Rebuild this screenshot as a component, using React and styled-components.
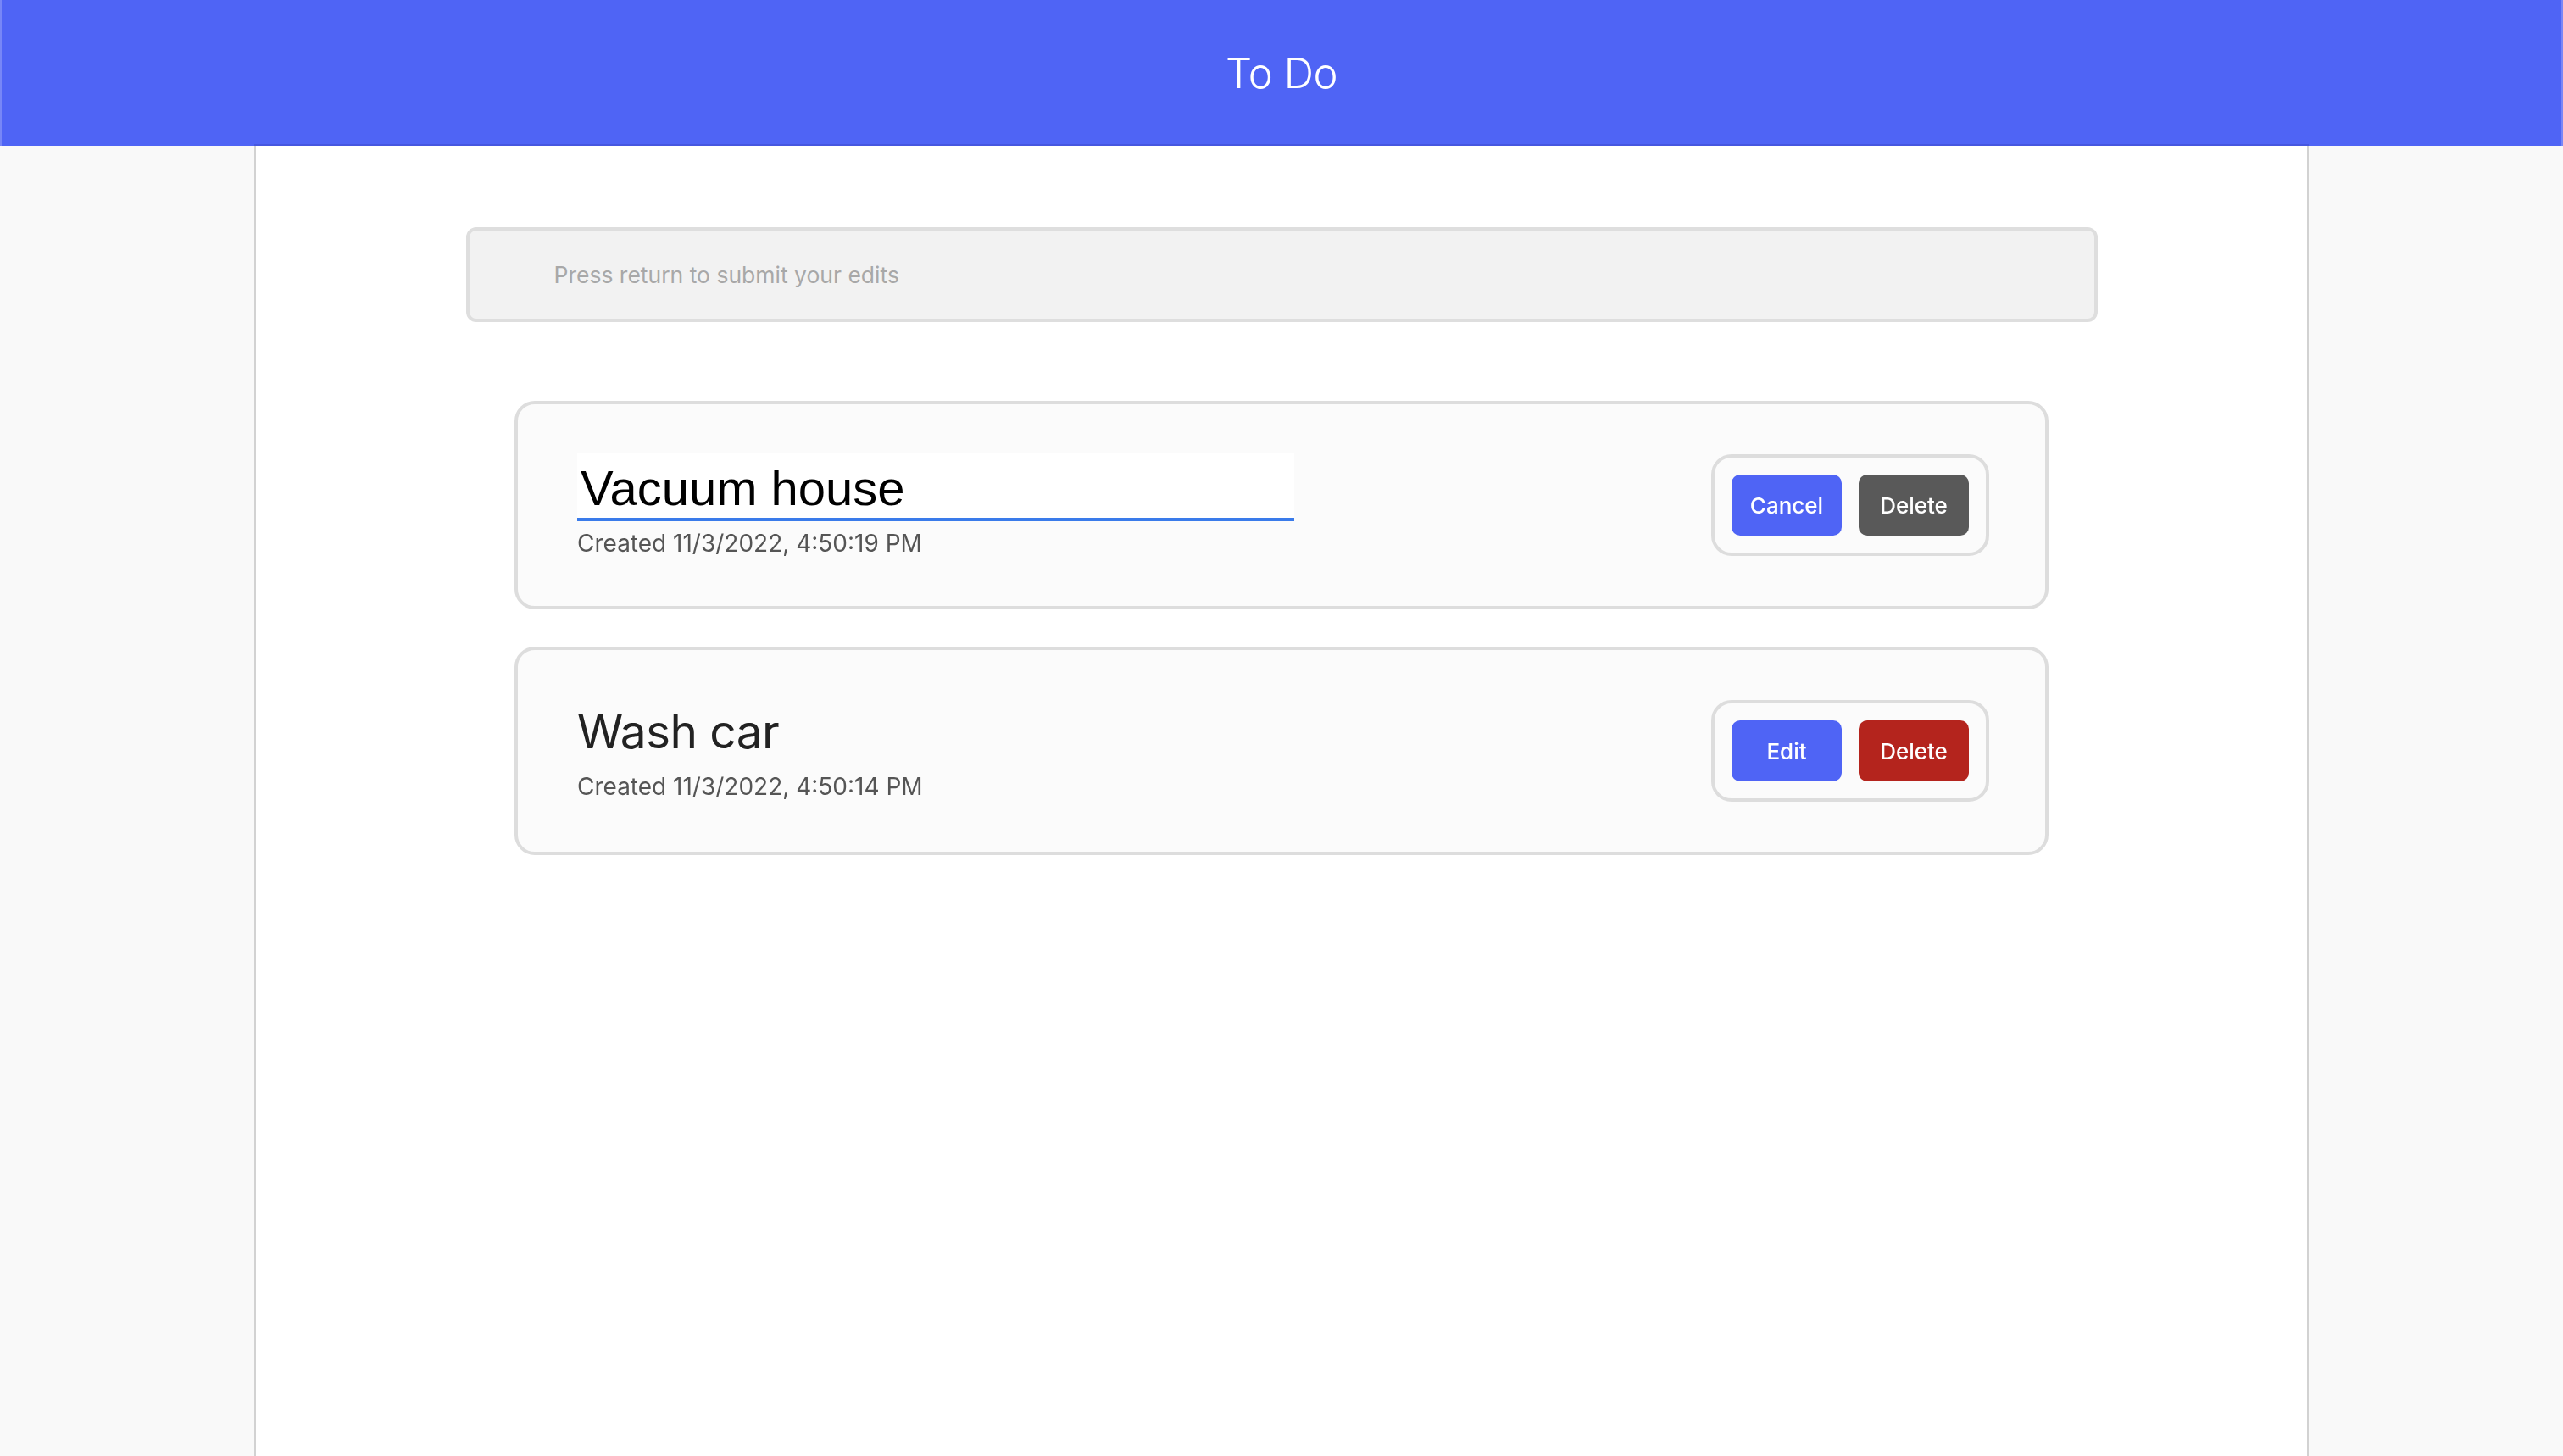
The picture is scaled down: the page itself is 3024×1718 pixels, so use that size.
import React, { useEffect, useRef } from 'react';
import styled, { createGlobalStyle } from 'styled-components';

const todos = [
  { id: 1, title: 'Vacuum house', created: '11/3/2022, 4:50:19 PM', editing: true },
  { id: 2, title: 'Wash car', created: '11/3/2022, 4:50:14 PM', editing: false }
];

function TodoItem({ todo }) {
  const inputRef = useRef(null);

  useEffect(() => {
    if (todo.editing && inputRef.current) {
      const el = inputRef.current;
      el.focus();
      el.setSelectionRange(el.value.length, el.value.length);
    }
  }, [todo.editing]);

  return (
    <Card>
      <TextBlock>
        {todo.editing ? (
          <TitleInput ref={inputRef} type="text" defaultValue={todo.title} />
        ) : (
          <Title>{todo.title}</Title>
        )}
        <CreatedAt $editing={todo.editing}>Created {todo.created}</CreatedAt>
      </TextBlock>
      <ButtonGroup>
        <ActionButton $color="#4f64f5">{todo.editing ? 'Cancel' : 'Edit'}</ActionButton>
        <ActionButton $color={todo.editing ? '#595959' : '#b4241d'}>Delete</ActionButton>
      </ButtonGroup>
    </Card>
  );
}

function App() {
  return (
    <>
      <GlobalStyle />
      <Header>
        <HeaderTitle>To Do</HeaderTitle>
      </Header>
      <Main>
        <NewTodoInput type="text" placeholder="Press return to submit your edits" />
        <List>
          {todos.map((todo) => (
            <TodoItem key={todo.id} todo={todo} />
          ))}
        </List>
      </Main>
    </>
  );
}

export default App;

const GlobalStyle = createGlobalStyle`
  * {
    box-sizing: border-box;
  }
  html, body {
    margin: 0;
    padding: 0;
    background-color: #f9f9f9;
    font-family: Inter, "Noto Sans", sans-serif;
  }
`;

const Header = styled.header`
  display: flex;
  align-items: center;
  justify-content: center;
  height: 172px;
  background-color: #4f64f5;
  border-left: 2px solid #7786f7;
  border-right: 2px solid #7786f7;
`;

const HeaderTitle = styled.h1`
  margin: 0;
  color: white;
  font-size: 49px;
  font-weight: 300;
  letter-spacing: -0.5px;
`;

const Main = styled.main`
  display: flex;
  flex-direction: column;
  align-items: center;
  width: 2424px;
  min-height: calc(100vh - 172px);
  margin: 0 auto;
  padding-top: 96px;
  background-color: white;
  border-left: 2px solid #d2d2d2;
  border-right: 2px solid #d2d2d2;
  box-shadow: 0 -2px 0 #4657e0;
`;

const NewTodoInput = styled.input`
  width: 1925px;
  height: 112px;
  padding: 0 100px;
  background-color: #f2f2f2;
  border: 4px solid #dedede;
  border-radius: 12px;
  font-family: Inter, sans-serif;
  font-size: 26.5px;
  color: #333;
  outline: none;

  &::placeholder {
    color: #a8a8a8;
  }
`;

const List = styled.div`
  display: flex;
  flex-direction: column;
  gap: 44px;
  margin-top: 93px;
`;

const Card = styled.div`
  display: flex;
  align-items: center;
  justify-content: space-between;
  width: 1810px;
  height: 246px;
  padding: 0 66px 0 70px;
  background-color: #fbfbfb;
  border: 4px solid #dddddd;
  border-radius: 24px;
`;

const TextBlock = styled.div`
  display: flex;
  flex-direction: column;
  align-items: flex-start;
`;

const TitleInput = styled.input`
  width: 846px;
  height: 80px;
  padding: 6px 4px 0;
  background-color: white;
  border: none;
  border-bottom: 4px solid #3a7bea;
  font-family: "Liberation Sans", Arial, sans-serif;
  font-size: 58px;
  color: black;
  caret-color: black;
  outline: none;
`;

const Title = styled.div`
  font-size: 55px;
  line-height: 70px;
  color: #222;
  letter-spacing: -0.6px;
`;

const CreatedAt = styled.div`
  margin-top: ${(props) => (props.$editing ? '9px' : '13px')};
  font-size: 28px;
  line-height: 34px;
  color: #555;
`;

const ButtonGroup = styled.div`
  display: flex;
  gap: 20px;
  padding: 20px;
  background-color: #fbfbfb;
  border: 4px solid #dddddd;
  border-radius: 24px;
`;

const ActionButton = styled.button`
  width: 130px;
  height: 72px;
  border: none;
  border-radius: 10px;
  background-color: ${(props) => props.$color};
  color: white;
  font-family: Inter, sans-serif;
  font-size: 26px;
  font-weight: 500;
  cursor: pointer;
`;
